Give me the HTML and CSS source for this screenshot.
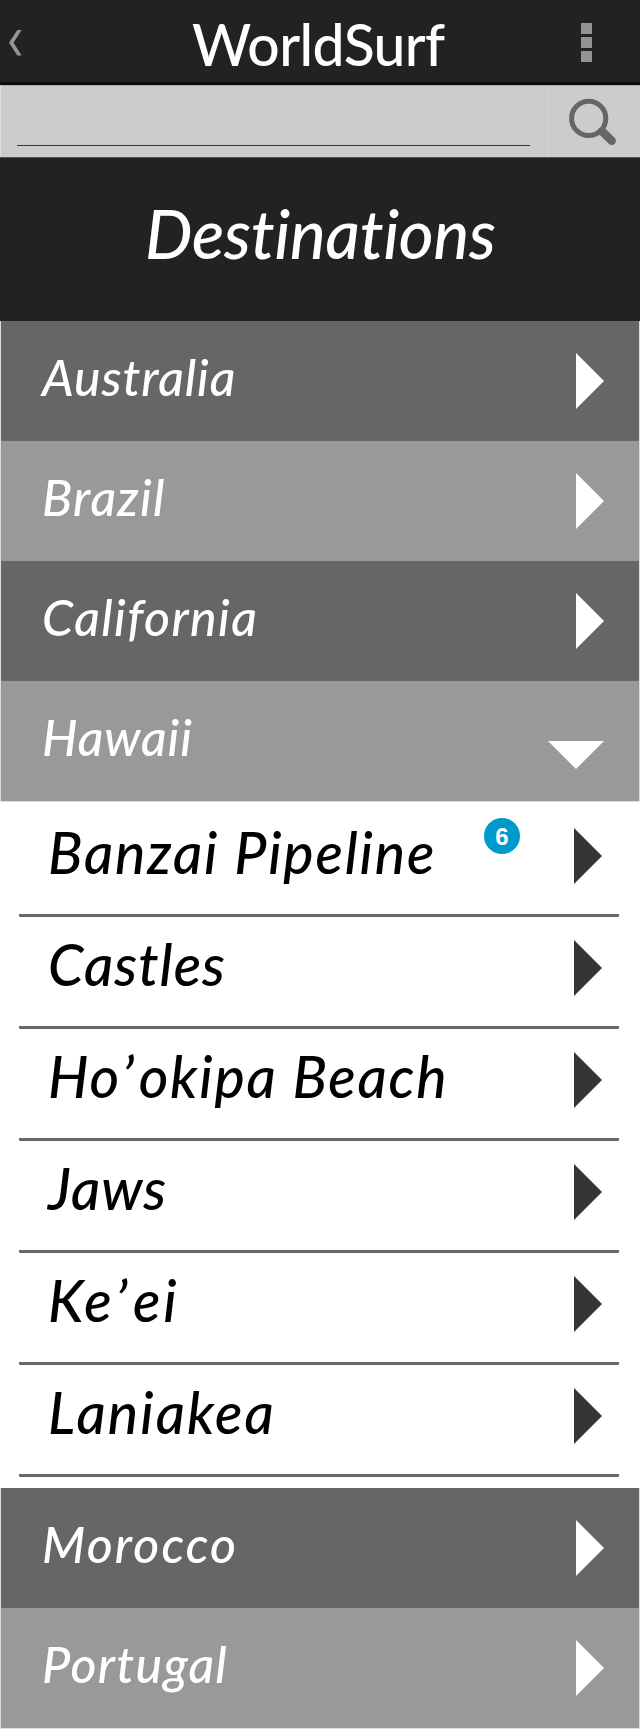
FILE: index.html
```
<!DOCTYPE html>
<html lang="en">
<head>
<meta charset="utf-8">
<title>WorldSurf</title>
<link rel="stylesheet" href="styles.css">
</head>
<body>
<header class="topbar">
  <svg class="back" width="13" height="26" viewBox="0 0 13 26"><path d="M8.3 0H12.6L4.6 12.7L12.6 25.4H8.3L0 12.7Z"/></svg>
  <h1 class="brand">WorldSurf</h1>
  <div class="menu"><i></i><i></i><i></i></div>
</header>
<div class="search">
  <div class="search-field"></div>
  <div class="search-button">
    <svg width="50" height="50" viewBox="0 0 50 50"><circle cx="20.7" cy="20.4" r="17.1" fill="none" stroke="#666" stroke-width="5"/><path d="M34 33.2L43.7 42.7" stroke="#666" stroke-width="8.4" stroke-linecap="round"/><path d="M31.5 30.7L36 35.2" stroke="#666" stroke-width="5"/></svg>
  </div>
</div>
<h2 class="title"><span>Destinations</span></h2>
<ul class="countries">
  <li class="country dark"><span class="name australia">Australia</span><b class="arrow"></b></li>
  <li class="country"><span class="name brazil">Brazil</span><b class="arrow"></b></li>
  <li class="country dark"><span class="name california">California</span><b class="arrow"></b></li>
  <li class="country"><span class="name hawaii">Hawaii</span><b class="arrow open"></b></li>
</ul>
<ul class="spots">
  <li class="spot"><span class="name banzai">Banzai Pipeline</span><span class="badge">6</span><b class="arrow"></b></li>
  <li class="spot"><span class="name castles">Castles</span><b class="arrow"></b></li>
  <li class="spot"><span class="name hookipa">Ho<span class="okina">’</span>okipa Beach</span><b class="arrow"></b></li>
  <li class="spot"><span class="name jaws">Jaws</span><b class="arrow"></b></li>
  <li class="spot"><span class="name keei">Ke<span class="okina">’</span>ei</span><b class="arrow"></b></li>
  <li class="spot"><span class="name laniakea">Laniakea</span><b class="arrow"></b></li>
</ul>
<ul class="countries">
  <li class="country dark"><span class="name morocco">Morocco</span><b class="arrow"></b></li>
  <li class="country"><span class="name portugal">Portugal</span><b class="arrow"></b></li>
</ul>
</body>
</html>
```
FILE: styles.css
```
* { box-sizing: border-box; }
body { margin: 0; width: 640px; background: #fff; font-family: Lato, "Liberation Sans", sans-serif; font-variant-ligatures: none; }
h1, h2, ul { margin: 0; padding: 0; list-style: none; }

.topbar { display: flex; height: 85px; background: #222; border-bottom: 3px solid #0d0d0d; color: #fff; }
.back { margin: 30px 0 0 9px; fill: #949494; }
.brand { width: 360px; margin: 12px 0 0 170px; font-size: 57px; line-height: 64px; font-weight: 500; letter-spacing: -0.6px; white-space: nowrap; }
.menu { display: grid; gap: 3px; align-content: start; margin: 23px 0 0 29px; }
.menu i { width: 11px; height: 11px; background: #949494; }

.search { display: flex; height: 72px; background: #ccc; border-top: 1px solid #b3abac; border-left: 1px solid #ddd; }
.search-field { width: 513px; height: 60px; margin-left: 16px; border-bottom: 1px solid #333; }
.search-button { width: 92px; margin-left: 18px; padding: 12px 0 0 19px; border-left: 1px solid #d4d4d4; }
.search-button svg { display: block; }

.title { height: 164px; padding: 35px 0 0 145px; background: #222; border-top: 1px solid #555; color: #fff; font-size: 67px; line-height: 80px; font-style: italic; font-weight: 500; letter-spacing: -0.2px; white-space: nowrap; }

.countries { border: solid #ddd; border-width: 0 1px; }
.countries:first-of-type, .countries:last-of-type { border-bottom-width: 1px; }
.country { display: flex; justify-content: space-between; height: 120px; padding: 0 35px 0 41px; background: #999; color: #fff; }
.dark { background: #666; }
.country .name { margin-top: 26px; font-size: 50px; line-height: 60px; }
.name { font-style: italic; font-weight: 500; white-space: nowrap; }
.arrow { width: 28px; height: 56px; background: currentColor; clip-path: polygon(0 0, 100% 50%, 0 100%); }
.country .arrow { margin-top: 32px; }
.country .open { width: 56px; height: 28px; margin-top: 60px; clip-path: polygon(0 0, 100% 0, 50% 100%); }

.spots { padding: 3px 21px 11px 19px; }
.spot { display: flex; height: 112px; padding: 0 17px 0 29px; border-bottom: 3px solid #666; border-radius: 1px; }
.spot .name { margin-top: 13px; font-size: 57px; line-height: 68px; color: #000; }
.spot .arrow { margin: 23px 0 0 auto; color: #333; }
.badge { width: 36px; height: 36px; margin: 13px 0 0 auto; border-radius: 50%; background: #09c; color: #fff; font: bold 24px/37px "Liberation Sans", Arial, sans-serif; text-align: center; }
.spot .badge + .arrow { margin-left: 54px; }
.okina { margin: 0 3px 0 1px; }

/* Tracking per label */
.australia { letter-spacing: 0.9px; }
.brazil { letter-spacing: 1.3px; }
.california { letter-spacing: 1.4px; }
.hawaii { letter-spacing: 0.9px; }
.banzai { letter-spacing: 1.85px; }
.castles { letter-spacing: 1px; }
.hookipa { letter-spacing: 1.8px; }
.jaws { letter-spacing: 1px; }
.keei { letter-spacing: 2.8px; }
.laniakea { letter-spacing: 2.1px; }
.morocco { letter-spacing: 2.1px; }
.portugal { letter-spacing: 1.3px; }
```
